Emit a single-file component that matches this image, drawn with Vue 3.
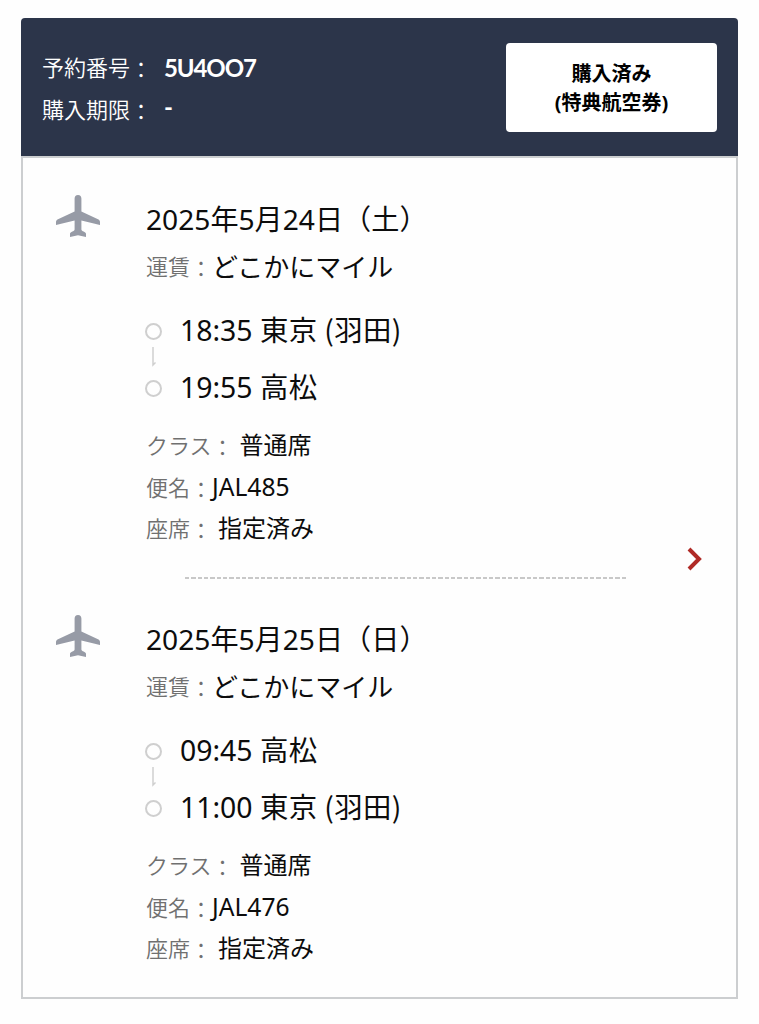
<template>
    <div class="page">
        <div class="reserve">
            <header class="reserve__header">
                <dl class="summary">
                    <div class="summary__row">
                        <dt>予約番号<span class="colon">：</span></dt>
                        <dd>5U4OO7</dd>
                    </div>
                    <div class="summary__row">
                        <dt>購入期限<span class="colon">：</span></dt>
                        <dd>-</dd>
                    </div>
                </dl>
                <div class="status">
                    <span>購入済み</span>
                    <span>(特典航空券)</span>
                </div>
            </header>

            <div class="reserve__body">
                <div class="flights">
                    <section v-for="item in flights" :key="item.no" class="flight">
                        <svg class="flight__icon" viewBox="0 0 46 44">
                            <path d="M23 1C20.700 1 19.600 2.600 19.600 4.600V17.500L3 25.200C1.600 26 1 26.800 1 28V31L19.600 26.500V35.500C19.400 37.500 15.200 37.500 15 39.800V43L23 41.200L31 43V39.800C30.800 37.500 26.600 37.500 26.400 35.500V26.500L45 31V28C45 26.800 44.400 26 43 25.200L26.400 17.500V4.600C26.400 2.600 25.300 1 23 1z" />
                        </svg>
                        <div class="flight__info">
                            <h2 class="date">{{ item.date }}</h2>
                            <p class="fare"><span class="label">運賃<span class="colon">：</span></span>{{ item.fare }}</p>

                            <div class="route">
                                <div class="route__line">
                                    <i class="dot"></i>
                                    <svg class="arrow" viewBox="0 0 6 20">
                                        <path d="M2 0V18L4.500 15.500" />
                                    </svg>
                                    <i class="dot"></i>
                                </div>
                                <div class="route__stops">
                                    <p v-for="stop in item.stops" :key="stop.time">{{ stop.time }} <span class="place">{{ stop.place }}</span></p>
                                </div>
                            </div>

                            <p class="detail"><span class="label">クラス<span class="colon">：</span></span><span class="space">{{ item.seatClass }}</span></p>
                            <p class="detail"><span class="label">便名<span class="colon">：</span></span><span class="no">{{ item.no }}</span></p>
                            <p class="detail"><span class="label">座席<span class="colon">：</span></span><span class="space">{{ item.seat }}</span></p>
                        </div>
                    </section>
                </div>
                <svg class="chevron" viewBox="0 0 16 24">
                    <path d="M2 2L12 12L2 22" />
                </svg>
            </div>
        </div>
    </div>
</template>

<script setup>
import { ref } from 'vue';

// 往路・復路
const flights = ref([
    {
        no: 'JAL485',
        date: '2025年5月24日（土）',
        fare: 'どこかにマイル',
        stops: [
            { time: '18:35', place: '東京 (羽田)' },
            { time: '19:55', place: '高松' },
        ],
        seatClass: '普通席',
        seat: '指定済み',
    },
    {
        no: 'JAL476',
        date: '2025年5月25日（日）',
        fare: 'どこかにマイル',
        stops: [
            { time: '09:45', place: '高松' },
            { time: '11:00', place: '東京 (羽田)' },
        ],
        seatClass: '普通席',
        seat: '指定済み',
    },
])
</script>

<style>
body {
    background: #fefefe;
}
</style>

<style scoped>
.page {
    box-sizing: border-box;
    height: 1024px;
    padding: 18px 21px 25px;
    font-family: "Noto Sans", "Noto Sans CJK JP", sans-serif;
    color: #0c0c0c;
    white-space: nowrap;
}

p,
h2,
dl,
dd {
    margin: 0;
    font-weight: 400;
}

.reserve {
    display: flex;
    flex-direction: column;
    height: 981px;
}

.reserve__header {
    display: flex;
    flex-shrink: 0;
    justify-content: space-between;
    box-sizing: border-box;
    height: 138px;
    padding: 25px 21px 0;
    border-radius: 4px 4px 0 0;
    background: #2c354a;
}

.summary {
    padding-top: 4px;
    color: #fff;
    font-size: 22px;
    line-height: 41.5px;

    .summary__row {
        display: flex;
    }

    dt {
        width: 122px;
        font-weight: 350;
    }

    dd {
        font-family: Lato, sans-serif;
        font-size: 24px;
        font-weight: 700;
        letter-spacing: -1.1px;
    }

    .summary__row:last-child dd {
        line-height: 36px;
    }
}

.colon {
    line-height: 0;
    vertical-align: -2px;
}

.status {
    display: flex;
    flex-direction: column;
    align-items: center;
    justify-content: center;
    width: 211px;
    height: 89px;
    border-radius: 4px;
    background: #fff;
    color: #000;
    font-size: 20px;
    font-weight: 700;
    line-height: 29px;
}

.reserve__body {
    display: flex;
    flex: 1;
    align-items: center;
    justify-content: space-between;
    box-sizing: border-box;
    padding: 0 33px 0 32px;
    border: 2px solid #ccced0;
}

.flights {
    align-self: flex-start;
    padding-top: 36px;
}

.flight {
    display: flex;
    position: relative;
    height: 420px;
}

.flight:last-child {
    height: 375px;
}

/* 便と便の間の点線 */
.flight:first-child::after {
    content: "";
    position: absolute;
    left: 130px;
    top: 383px;
    width: 443px;
    height: 2px;
    background: repeating-linear-gradient(90deg, #c8c8c8 0 4.330px, transparent 4.330px 6.330px);
}

.flight__icon {
    width: 46px;
    height: 44px;
    margin-right: 45px;
    fill: #979ba6;
}

.date {
    font-size: 28.150px;
    line-height: 50px;
}

.fare {
    height: 46px;
    font-size: 26px;
    line-height: 47px;

    .label {
        line-height: 0;
        vertical-align: 2px;
    }
}

.label {
    color: #707070;
    font-size: 22px;
    font-weight: 350;
}

.route {
    display: flex;
    height: 114px;
    margin: 12px 0 8px;
    font-size: 28.400px;
    line-height: 57px;

    p {
        height: 57px;
    }
}

.route__line {
    display: flex;
    flex-direction: column;
    align-items: center;
    width: 15px;
    margin-right: 19px;
    padding-top: 21px;
}

.dot {
    box-sizing: border-box;
    flex-shrink: 0;
    width: 17px;
    height: 17px;
    border: 2.500px solid #cfcfcf;
    border-radius: 50%;
}

.arrow {
    flex-shrink: 0;
    width: 6px;
    height: 20px;
    margin: 7px 0 13px;
    fill: none;
    stroke: #cfcfcf;
    stroke-width: 1.500;
}

.place {
    font-family: "Noto Sans CJK JP", sans-serif;
    line-height: 0;
    letter-spacing: 0.4px;
}

.detail {
    height: 41.500px;
    font-size: 24px;
    line-height: 41.500px;
}

.no {
    font-size: 24.600px;
}

.space {
    margin-left: 6px;
}

.chevron {
    width: 16px;
    height: 24px;
    margin-bottom: 37px;
    fill: none;
    stroke: #b02a26;
    stroke-width: 4;
}
</style>
